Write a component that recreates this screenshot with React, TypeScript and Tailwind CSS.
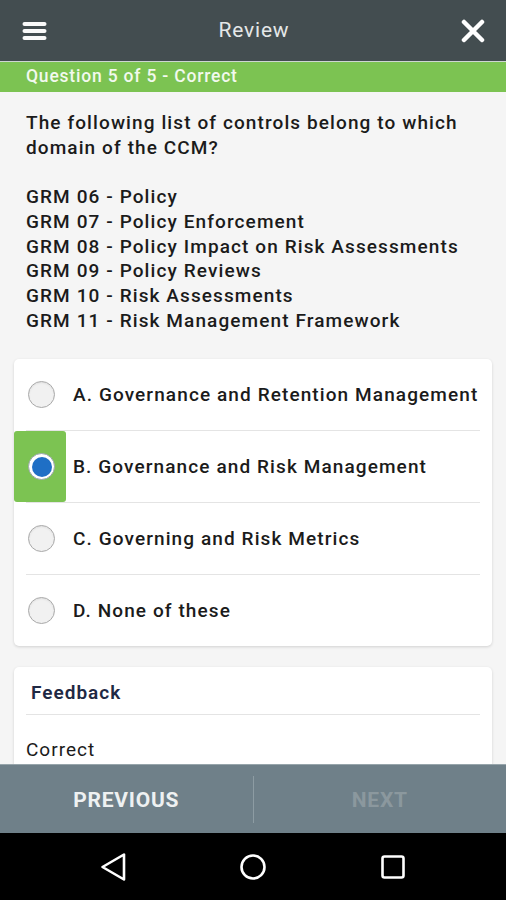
import React from "react";

const options = [
  { label: "A. Governance and Retention Management", selected: false },
  { label: "B. Governance and Risk Management", selected: true },
  { label: "C. Governing and Risk Metrics", selected: false },
  { label: "D. None of these", selected: false },
];

const controls = [
  "GRM 06 - Policy",
  "GRM 07 - Policy Enforcement",
  "GRM 08 - Policy Impact on Risk Assessments",
  "GRM 09 - Policy Reviews",
  "GRM 10 - Risk Assessments",
  "GRM 11 - Risk Management Framework",
];

function Radio({ selected }: { selected: boolean }) {
  if (selected) {
    return (
      <div className="w-[27px] h-[27px] rounded-full bg-white border border-[#9aa5ab] flex items-center justify-center">
        <div className="w-[20px] h-[20px] rounded-full bg-[#1f6fc5]" />
      </div>
    );
  }
  return (
    <div className="w-[27px] h-[27px] rounded-full bg-[#f1f1f1] border-[1.5px] border-[#a9a9a9] shadow-[inset_0_1px_2px_rgba(0,0,0,0.08)]" />
  );
}

export default function App() {
  return (
    <div
      className="w-[506px] h-[900px] flex flex-col bg-[#f5f5f5] overflow-hidden"
      style={{ fontFamily: "Roboto, 'Noto Sans', sans-serif" }}
    >
      {/* Header */}
      <div className="h-[61px] shrink-0 bg-[#434d50] flex items-center justify-between px-[22px]">
        <svg width="25" height="20" viewBox="0 0 25 20">
          <rect x="0.5" y="1" width="24" height="4" rx="2" fill="#fafafa" />
          <rect x="0.5" y="8" width="24" height="4" rx="2" fill="#fafafa" />
          <rect x="0.5" y="15" width="24" height="4" rx="2" fill="#fafafa" />
        </svg>
        <div className="text-[21px] tracking-[0.8px] text-[#e4e7e8] leading-none">Review</div>
        <svg width="24" height="24" viewBox="0 0 24 24" className="mr-[-1px]">
          <path d="M3 3 L21 21 M21 3 L3 21" stroke="#ffffff" strokeWidth="4.5" strokeLinecap="round" />
        </svg>
      </div>
      <div className="h-px shrink-0 bg-[#cdd6d2]" />
      <div className="h-[30px] shrink-0 bg-[#7cc352] flex items-center px-[26px]">
        <span className="text-[17.5px] tracking-[0.8px] font-medium text-[#f2f9ee] leading-none">
          Question 5 of 5 - Correct
        </span>
      </div>

      {/* Content */}
      <div className="flex-1 overflow-hidden">
        <div className="px-[26px] pt-[19px] text-[19px] tracking-[1.1px] font-medium text-[#1b1b1b] leading-[24.7px] whitespace-nowrap">
          <div>The following list of controls belong to which</div>
          <div>domain of the CCM?</div>
          <div className="h-[24.7px]" />
          {controls.map((c) => (
            <div key={c}>{c}</div>
          ))}
        </div>

        <div className="mx-[14px] mt-[26px] bg-white rounded-[5px] shadow-[0_1px_3px_rgba(0,0,0,0.15)] overflow-hidden">
          {options.map((o, i) => (
            <React.Fragment key={o.label}>
              {i > 0 && <div className="h-px mx-[12px] bg-[#e4e4e4]" />}
              <div className="h-[71px] flex items-stretch">
                <div
                  className={
                    "w-[52px] shrink-0 flex items-center justify-center pl-[3px] " +
                    (o.selected ? "bg-[#7cc352] rounded-[3px]" : "")
                  }
                >
                  <Radio selected={o.selected} />
                </div>
                <div className="flex items-center pl-[7px] text-[19px] tracking-[1.1px] font-medium text-[#1b1b1b] whitespace-nowrap">
                  {o.label}
                </div>
              </div>
            </React.Fragment>
          ))}
        </div>

        <div className="mx-[14px] mt-[21px] bg-white rounded-[5px] shadow-[0_1px_3px_rgba(0,0,0,0.15)]">
          <div className="px-[17px] pt-[14px] pb-[9px] text-[19px] tracking-[1px] font-semibold text-[#1f2944] leading-[24px]">
            Feedback
          </div>
          <div className="h-px mx-[12px] bg-[#e4e4e4]" />
          <div className="px-[12px] pt-[23px] pb-[20px] text-[19px] tracking-[1px] text-[#1b1b1b] leading-[24px]">
            Correct
          </div>
        </div>
      </div>

      {/* Bottom bar */}
      <div className="h-[69px] shrink-0 bg-[#6f8089] border-t border-[#97a5ab] flex items-center">
        <div className="flex-1 flex items-center justify-center pt-[3px] text-[21px] tracking-[0.75px] font-bold text-[#eef1f2]">
          PREVIOUS
        </div>
        <div className="w-px h-[47px] bg-[#8d9ca3]" />
        <div className="flex-1 flex items-center justify-center pt-[3px] text-[21px] tracking-[0.75px] font-bold text-[#8b989e]">
          NEXT
        </div>
      </div>

      {/* Nav bar */}
      <div className="h-[67px] shrink-0 bg-black flex items-center justify-between px-[98px]">
        <svg width="30" height="30" viewBox="0 0 30 30">
          <path d="M26 2.5 L26 27.5 L4.5 15 Z" fill="none" stroke="#ffffff" strokeWidth="2.6" strokeLinejoin="round" />
        </svg>
        <svg width="30" height="30" viewBox="0 0 30 30">
          <circle cx="15" cy="15" r="11.5" fill="none" stroke="#ffffff" strokeWidth="2.6" />
        </svg>
        <svg width="30" height="30" viewBox="0 0 30 30">
          <rect x="4.5" y="4.5" width="21" height="21" rx="2" fill="none" stroke="#ffffff" strokeWidth="2.6" />
        </svg>
      </div>
    </div>
  );
}
